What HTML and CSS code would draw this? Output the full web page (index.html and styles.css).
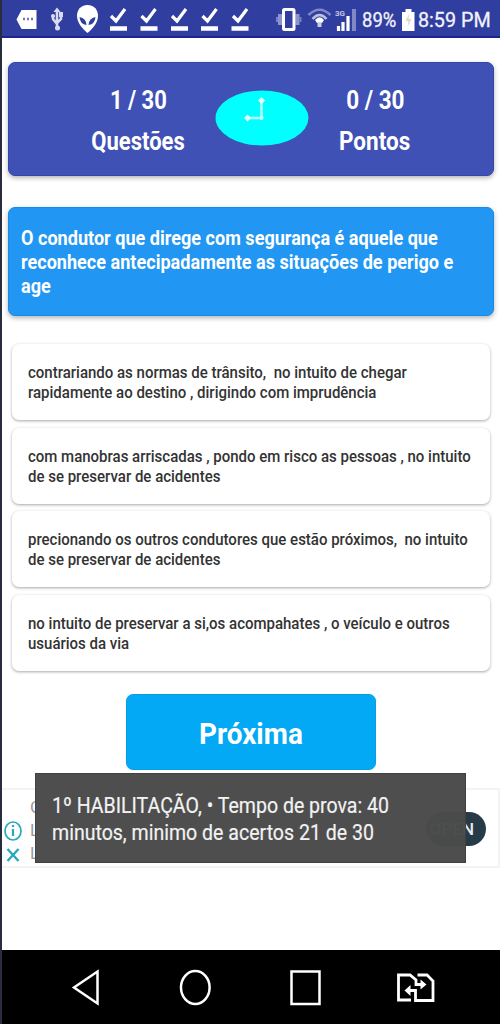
FILE: index.html
```html
<!DOCTYPE html>
<html lang="pt-BR">
<head>
<meta charset="utf-8">
<title>Simulado</title>
<link rel="stylesheet" href="styles.css">
</head>
<body>
<div class="phone">
  <header class="status">
    <svg class="status-icons" width="500" height="38" viewBox="0 0 500 38">
      <path d="M16.500 19.500L21.500 10H36.500V29H21.500Z" fill="#fff"/>
      <path d="M23 19h2m2 0h2m2 0h2" stroke="#7477b7" stroke-width="2.500"/>
      <g fill="none" stroke="#d9dcef" stroke-width="2.500"><path d="M57 11V29M53 15v4l4 5M61 13v6l-4 4"/></g>
      <g fill="#d9dcef"><path d="M53.500 12L57 7.500L60.500 12Z"/><circle cx="57.500" cy="28" r="2.500"/><circle cx="53" cy="16" r="2"/><path d="M59 12h4v5h-4z"/></g>
      <path d="M87.500 5C80.500 5 77 10 77 16C77 23 83 29 87.500 33C92 29 98 23 98 16C98 10 94.500 5 87.500 5Z" fill="#fff"/>
      <path d="M79.500 17Q86 18 86.500 25Q80 24 79.500 17ZM95.500 17Q89 18 88.500 25Q95 24 95.500 17Z" fill="#303f9f"/>
      <g fill="none" stroke="#fff"><path d="M111 16l5 5L125 9M141.500 16l5 5L155.500 9M172 16l5 5L186 9M202.500 16l5 5L216.500 9M233 16l5 5L247 9" stroke-width="3.200"/><path d="M110 28.500h17M140.500 28.500h17M171 28.500h17M201 28.500h17M231.500 28.500h17" stroke-width="4.500"/></g>
      <path d="M280 14v11M297.500 14v11" stroke="#8c94cb" stroke-width="4"/><path d="M277 17v5M300.500 17v5" stroke="#7680c0" stroke-width="2"/>
      <rect x="283.500" y="9.500" width="10.500" height="20" rx="1" fill="#303f9f" stroke="#fff" stroke-width="3"/>
      <g fill="none" stroke-width="2.500"><path d="M308.500 15Q319.500 4.500 330.500 15" stroke="#7f89c7"/><path d="M312.500 19Q319.500 11 326.500 19" stroke="#bcc1e0"/></g>
      <path d="M315 20Q319.500 14.500 324 20L322 23H317Z" fill="#fff"/><path d="M319.500 22v5" stroke="#c9cce5" stroke-width="4"/>
      <text x="335" y="15.500" class="net">3G</text>
      <path d="M338.500 26v5M343 22v9M348 16v15" stroke="#fff" stroke-width="3.200"/><path d="M354 9v22" stroke="#8089c5" stroke-width="4"/>
      <path d="M402 12h3.500v-3h6v3h3v19H402Z" fill="#fff"/><path d="M409.500 13l-4 8h3l-1 6 4-8h-3Z" fill="#ded9c4"/>
    </svg>
    <div class="status-text"><span class="squeeze battery">89%</span><span class="squeeze time">8:59 PM</span></div>
  </header>
  <main class="content">
    <section class="score">
      <div class="stat questions"><span class="squeeze">1 / 30</span><span class="squeeze">Questões</span></div>
      <svg class="clock" width="94" height="56" viewBox="0 0 94 56"><ellipse cx="47" cy="28" rx="46.500" ry="27.500" fill="#0ff"/><path d="M46.500 11V28H32" fill="none" stroke="#b7ffff" stroke-width="2.500"/><path d="M46.500 7l3.500 3.500-3.500 3.500-3.500-3.500ZM32.500 24.500l3.500 3.500-3.500 3.500-3.500-3.500Z" fill="#e2ffff"/><circle cx="46.500" cy="28" r="2" fill="#cff"/></svg>
      <div class="stat points"><span class="squeeze">0 / 30</span><span class="squeeze">Pontos</span></div>
    </section>
    <section class="question"><p class="squeeze">O condutor que direge com segurança é aquele que
reconhece antecipadamente as situações de perigo e
age</p></section>
    <section class="answers">
      <div class="answer"><p class="squeeze">contrariando as normas de trânsito,  no intuito de chegar
rapidamente ao destino , dirigindo com imprudência</p></div>
      <div class="answer"><p class="squeeze">com manobras arriscadas , pondo em risco as pessoas , no intuito
de se preservar de acidentes</p></div>
      <div class="answer"><p class="squeeze">precionando os outros condutores que estão próximos,  no intuito
de se preservar de acidentes</p></div>
      <div class="answer"><p class="squeeze">no intuito de preservar a si,os acompahates , o veículo e outros
usuários da via</p></div>
    </section>
    <button class="next"><span class="squeeze">Próxima</span></button>
    <section class="ad">
      <svg class="ad-marks" width="24" height="76" viewBox="0 0 24 76"><g fill="none" stroke="#28a9bd"><ellipse cx="13" cy="41" rx="8" ry="9" stroke-width="1.700"/><path d="M13 39v7M13 35v2" stroke-width="2.200"/><path d="M7.500 59l11 12M18.500 59l-11 12" stroke-width="2.400"/></g></svg>
      <div class="ad-copy"><span>G</span><span>L</span><span>L</span></div>
      <span class="open">OPEN</span>
      <div class="toast"><p class="squeeze">1º HABILITAÇÃO, • Tempo de prova: 40
minutos, minimo de acertos 21 de 30</p></div>
    </section>
  </main>
  <nav class="nav">
    <svg width="500" height="74" viewBox="0 0 500 74" fill="none" stroke="#fff" stroke-width="2.500">
      <path d="M97.500 21.500V53.500L74 37.500Z"/><ellipse cx="195.300" cy="37.500" rx="14.300" ry="16.500"/><rect x="291.500" y="21.500" width="28" height="32.500"/>
      <path d="M411 50H398.500V25H410L416 30V34.500H421M417.500 25H427L433 31V50.500H415.500V40.500H409" stroke-width="2.800"/>
      <path d="M420.500 29.500l6 5-6 5ZM410.500 35l-6 5.500 6 5.500Z" fill="#fff" stroke="none"/>
    </svg>
  </nav>
</div>
</body>
</html>
```
FILE: styles.css
```css
* { box-sizing: border-box; }
body { margin: 0; background: #fff; font-family: Roboto, "Liberation Sans", sans-serif; }
p { margin: 0; }
svg { display: block; }
.phone { width: 500px; height: 1024px; display: flex; flex-direction: column; position: relative; overflow: hidden; }
.phone::before { content: ""; position: absolute; left: 0; top: 0; width: 2px; height: 1024px; background: #292c3c; z-index: 5; }
.squeeze { --fit: .88; display: block; width: max-content; white-space: pre; transform: scaleX(var(--fit)); transform-origin: left center; }
.status { height: 38px; background: #303f9f; border-bottom: 2px solid #1b2490; position: relative; flex: none; }
.status-text { position: absolute; inset: 0; color: #f2f3fb; font-size: 21px; line-height: 39px; -webkit-text-stroke: .3px; }
.status-text span { position: absolute; top: 1px; }
.battery { --fit: .88; left: 362px; }
.time { --fit: .94; left: 418px; }
.net { font: 700 8px Roboto, sans-serif; fill: #c2c6e4; }
.content { height: 912px; padding: 24px 6px 0 8px; display: flex; flex-direction: column; flex: none; }
.score { height: 114px; flex: none; background: #3f51b5; border: 1px solid #3445aa; border-radius: 7px; box-shadow: 0 2px 5px rgba(0,0,0,.3); display: grid; grid-template-columns: 206px 94px 1fr; color: #fff; font-size: 25px; font-weight: 700; line-height: 41px; }
.stat { padding-top: 17px; display: flex; flex-direction: column; align-items: center; }
.stat .squeeze { transform-origin: center; }
.questions { padding-left: 52px; }
.points { padding-right: 52px; }
.points .squeeze { --fit: .9; }
.clock { margin-top: 27px; }
.question { height: 109px; flex: none; margin-top: 31px; padding: 18px 12px; background: #2196f3; border: 1px solid #168bea; border-radius: 7px; box-shadow: 0 2px 5px rgba(0,0,0,.3); color: #fff; font-size: 20px; font-weight: 700; line-height: 24px; }
.question .squeeze { --fit: .904; }
.answers { display: grid; grid-template-columns: minmax(0, 1fr); grid-template-rows: repeat(4, 76px); gap: 7.500px; margin: 28px 4px 0; }
.answer { padding: 18px 16px; background: #fff; border-radius: 7px; box-shadow: 0 1px 3px rgba(0,0,0,.35); font-size: 17px; font-weight: 500; line-height: 20px; color: #333; }
.answer .squeeze { --fit: .882; }
.next { flex: none; align-self: flex-start; margin: 23px 0 0 118px; width: 250px; height: 76px; padding: 4px 0 0; border: 1px solid #0a9fe5; border-radius: 7px; background: #03a9f4; color: #fff; display: flex; align-items: center; justify-content: center; font: 700 30px Roboto, sans-serif; }
.next .squeeze { --fit: .93; transform-origin: center; }
.ad { position: relative; height: 80px; flex: none; margin: 18px -6px 0 -10px; border: 2px solid #f3f3f3; border-left: 0; display: flex; }
.ad-marks { flex: none; margin-left: 2px; }
.ad-copy { margin: 6px 0 0 6px; display: flex; flex-direction: column; font-size: 17px; line-height: 23px; color: #999; }
.open { position: absolute; right: 12px; top: 22px; width: 60px; height: 34px; border-radius: 17px; background: #263b47; color: #e8ecee; font-size: 17px; font-weight: 500; line-height: 34px; text-align: right; padding-right: 12px; }
.toast { position: absolute; left: 37px; top: -17px; width: 431px; height: 90px; padding: 18px 16px; background: rgba(74,74,74,.98); border: 1px solid #414141; color: #f2f2f2; font-size: 22px; line-height: 27px; -webkit-text-stroke: .2px; }
.toast .squeeze { --fit: .888; }
.nav { height: 74px; flex: none; background: #000; }
```
